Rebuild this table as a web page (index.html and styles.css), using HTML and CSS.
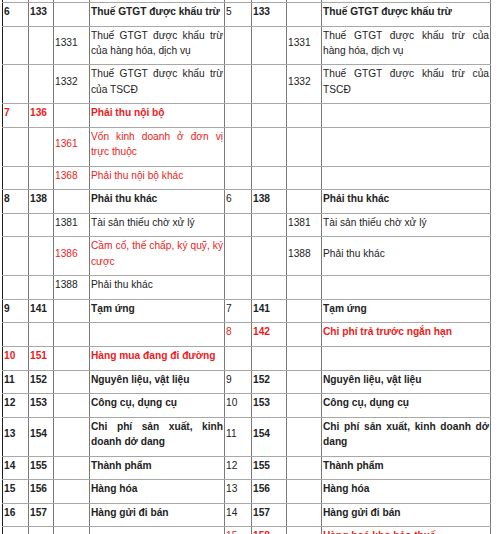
FILE: index.html
```html
<!DOCTYPE html>
<html lang="vi">
<head>
<meta charset="utf-8">
<title>Bảng tài khoản</title>
<link rel="stylesheet" href="styles.css">
</head>
<body>
<table class="acc">
<colgroup>
<col class="c1"><col class="c2"><col class="c3"><col class="c4">
<col class="c5"><col class="c6"><col class="c7"><col class="c8">
</colgroup>
<tbody>
<tr class="cut"><td></td><td></td><td></td><td></td><td></td><td></td><td></td><td></td></tr>
<tr class="b"><td>6</td><td>133</td><td></td><td>Thuế GTGT được khấu trừ</td><td class="n">5</td><td>133</td><td></td><td>Thuế GTGT được khấu trừ</td></tr>
<tr><td></td><td></td><td>1331</td><td>Thuế GTGT được khấu trừ của hàng hóa, dịch vụ</td><td></td><td></td><td>1331</td><td>Thuế GTGT được khấu trừ của hàng hóa, dịch vụ</td></tr>
<tr><td></td><td></td><td>1332</td><td>Thuế GTGT được khấu trừ của TSCĐ</td><td></td><td></td><td>1332</td><td>Thuế GTGT được khấu trừ của TSCĐ</td></tr>
<tr class="b"><td class="r">7</td><td class="r">136</td><td></td><td class="r">Phải thu nội bộ</td><td></td><td></td><td></td><td></td></tr>
<tr><td></td><td></td><td class="r">1361</td><td class="r">Vốn kinh doanh ở đơn vị trực thuộc</td><td></td><td></td><td></td><td></td></tr>
<tr><td></td><td></td><td class="r">1368</td><td class="r">Phải thu nội bộ khác</td><td></td><td></td><td></td><td></td></tr>
<tr class="b"><td>8</td><td>138</td><td></td><td>Phải thu khác</td><td class="n">6</td><td>138</td><td></td><td>Phải thu khác</td></tr>
<tr><td></td><td></td><td>1381</td><td>Tài sản thiếu chờ xử lý</td><td></td><td></td><td>1381</td><td>Tài sản thiếu chờ xử lý</td></tr>
<tr><td></td><td></td><td class="r">1386</td><td class="r">Cầm cố, thế chấp, ký quỹ, ký cược</td><td></td><td></td><td>1388</td><td>Phải thu khác</td></tr>
<tr><td></td><td></td><td>1388</td><td>Phải thu khác</td><td></td><td></td><td></td><td></td></tr>
<tr class="b"><td>9</td><td>141</td><td></td><td>Tạm ứng</td><td class="n">7</td><td>141</td><td></td><td>Tạm ứng</td></tr>
<tr class="b"><td></td><td></td><td></td><td></td><td class="n r">8</td><td class="r">142</td><td></td><td class="r">Chi phí trả trước ngắn hạn</td></tr>
<tr class="b"><td class="r">10</td><td class="r">151</td><td></td><td class="r">Hàng mua đang đi đường</td><td></td><td></td><td></td><td></td></tr>
<tr class="b"><td>11</td><td>152</td><td></td><td>Nguyên liệu, vật liệu</td><td class="n">9</td><td>152</td><td></td><td>Nguyên liệu, vật liệu</td></tr>
<tr class="b"><td>12</td><td>153</td><td></td><td>Công cụ, dụng cụ</td><td class="n">10</td><td>153</td><td></td><td>Công cụ, dụng cụ</td></tr>
<tr class="b"><td>13</td><td>154</td><td></td><td>Chi phí sản xuất, kinh doanh dở dang</td><td class="n">11</td><td>154</td><td></td><td>Chi phí sản xuất, kinh doanh dở dang</td></tr>
<tr class="b"><td>14</td><td>155</td><td></td><td>Thành phẩm</td><td class="n">12</td><td>155</td><td></td><td>Thành phẩm</td></tr>
<tr class="b"><td>15</td><td>156</td><td></td><td>Hàng hóa</td><td class="n">13</td><td>156</td><td></td><td>Hàng hóa</td></tr>
<tr class="b"><td>16</td><td>157</td><td></td><td>Hàng gửi đi bán</td><td class="n">14</td><td>157</td><td></td><td>Hàng gửi đi bán</td></tr>
<tr class="b"><td></td><td></td><td></td><td></td><td class="n r">15</td><td class="r">158</td><td></td><td class="r">Hàng hoá kho bảo thuế</td></tr>
</tbody>
</table>
</body>
</html>
```
FILE: styles.css
```css
html, body {
  margin: 0;
  padding: 0;
  background: #fff;
  overflow: hidden;
}
body {
  font-family: "Liberation Sans", Arial, sans-serif;
  font-size: 10.2px;
  line-height: 15.2px;
  color: #222;
}
.acc {
  border-collapse: collapse;
  table-layout: fixed;
  width: 489px;
  margin: -20.6px 0 0 2px;
}
.c1 { width: 26px; }
.c2 { width: 25px; }
.c3 { width: 36px; }
.c4 { width: 135px; }
.c5 { width: 27px; }
.c6 { width: 35px; }
.c7 { width: 35px; }
.c8 { width: 169px; }
.acc td {
  padding: 1px 1px 6.4px 1px;
  vertical-align: middle;
  text-align: justify;
  border-left: 1px solid #7a7a7a;
  border-right: 1px solid #7a7a7a;
  border-top: 1px solid #a8a8a8;
  border-bottom: 1px solid #a8a8a8;
  overflow: hidden;
}
.acc td:first-child {
  border-left: 1px solid #1e1e1e;
}
.acc tr.cut td {
  height: 15.2px;
  border-top: none;
}
.b td { font-weight: bold; }
.b td.n { font-weight: normal; }
.acc td.r { color: #ec1b1b; }
```
